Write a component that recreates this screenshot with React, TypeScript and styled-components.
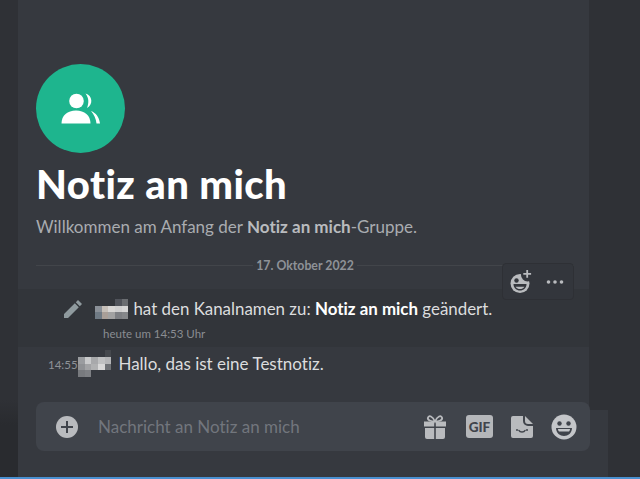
import React from 'react';
import styled, { createGlobalStyle } from 'styled-components';

const GlobalStyle = createGlobalStyle`
	html, body {
		margin: 0;
		padding: 0;
		background: #2f3136;
	}
	* {
		box-sizing: border-box;
	}
`;

const Shell = styled.div`
	width: 640px;
	height: 479px;
	display: grid;
	grid-template-columns: 18px 571px 19px 32px;
	grid-template-rows: 410px 67px 2px;
	overflow: hidden;
	font-family: 'Lato', 'Noto Sans', sans-serif;
	font-variant-ligatures: none;
	background: #2f3136;
`;

const LeftRail = styled.div`
	grid-column: 1;
	grid-row: 1 / 3;
	background: linear-gradient(#2f3136 0, #2f3136 400px, #292b2f 425px);
`;

const Main = styled.main`
	grid-column: 2;
	grid-row: 1 / 3;
	background: #36393f;
	display: flex;
	flex-direction: column;
	padding-top: 64px;
	position: relative;
`;

const SideExtension = styled.div`
	grid-column: 3;
	grid-row: 2;
	background: #36393f;
`;

const TaskbarEdge = styled.div`
	grid-column: 1 / -1;
	grid-row: 3;
	background: #4a90d0;
`;

const Welcome = styled.section`
	padding-left: 18px;
`;

const GroupAvatar = styled.div`
	width: 89px;
	height: 89px;
	border-radius: 50%;
	background: #1eb58e;
	display: flex;
	align-items: center;
	justify-content: center;
`;

const Title = styled.h1`
	margin: 9px 0 0;
	font-size: 40px;
	line-height: 44px;
	font-weight: 900;
	letter-spacing: 0.45px;
	color: #ffffff;
`;

const Subtitle = styled.p`
	margin: 11px 0 0;
	font-size: 17px;
	line-height: 20px;
	color: #a9acb0;
	b {
		font-weight: 700;
		color: #b9bbbe;
	}
`;

const DateDivider = styled.div`
	margin: 18px 15px 0 18px;
	display: flex;
	align-items: center;
	gap: 3px;
	height: 20px;
	font-size: 12.3px;
	font-weight: 700;
	color: #8e9297;
	&::before,
	&::after {
		content: '';
		flex: 1;
		height: 1px;
		background: #42454a;
	}
`;

const Toolbar = styled.div`
	position: absolute;
	left: 484px;
	top: 263px;
	width: 72px;
	height: 37px;
	display: flex;
	align-items: center;
	gap: 14px;
	padding-left: 7px;
	background: #33363c;
	border: 1px solid #2e3035;
	border-radius: 4px;
`;

const SystemRow = styled.div`
	margin-top: 14px;
	height: 58px;
	background: #32353a;
	display: grid;
	grid-template-columns: 77px 1fr;
	grid-template-rows: 31px 1fr;
	align-items: end;
`;

const PencilCell = styled.div`
	grid-row: 1;
	display: flex;
	padding-left: 45px;
	margin-bottom: 1px;
`;

const SystemLine = styled.div`
	grid-column: 2;
	display: flex;
	align-items: center;
	font-size: 16.9px;
	line-height: 22px;
	color: #dcddde;
	b {
		font-weight: 700;
		color: #ffffff;
		white-space: pre;
	}
`;

const SystemTime = styled.div`
	grid-column: 2;
	align-self: start;
	margin-top: 7px;
	padding-left: 8px;
	font-size: 11.5px;
	line-height: 14px;
	color: #8a8d92;
`;

const MessageRow = styled.div`
	height: 33px;
	display: flex;
	align-items: center;
	padding-left: 30px;
	font-size: 17px;
	color: #dcddde;
`;

const Stamp = styled.span`
	font-size: 11.5px;
	padding-top: 2px;
	color: #8e9297;
	width: 30px;
`;

const Mosaic = styled.div<{ $gap: number }>`
	display: grid;
	grid-template-columns: repeat(5, 6.7px);
	grid-auto-rows: 6.7px;
	margin-right: ${(props) => props.$gap}px;
	flex: none;
`;

const MosaicCell = styled.i<{ $shade: string }>`
	display: block;
	background: ${(props) => props.$shade};
`;

const Composer = styled.div`
	position: absolute;
	left: 18px;
	top: 402px;
	width: 554px;
	height: 49px;
	border-radius: 8px;
	background: #40444b;
	display: flex;
	align-items: center;
	padding: 0 13px 0 19px;
`;

const Placeholder = styled.div`
	flex: 1;
	margin-left: 19px;
	font-size: 17px;
	color: #72767d;
`;

const ComposerIcons = styled.div`
	display: flex;
	align-items: center;
	gap: 17px;
`;

const GiftIcon = styled.svg`
	margin-right: 2px;
`;

const GifBadge = styled.div`
	width: 27px;
	height: 23px;
	border-radius: 3px;
	background: #b5b7ba;
	color: #40444b;
	font-size: 13.5px;
	font-weight: 900;
	display: flex;
	align-items: center;
	justify-content: center;
`;

const nameShades = [
	['transparent', 'transparent', 'transparent', '#50535a', '#6a6d71'],
	['#8a9097', '#c6bfb8', '#d8d6d4', '#cfcfcf', '#d6d6d6'],
	['#6f7a84', '#a99f98', '#a2a2a2', '#7e8084', '#85878a'],
];

const stampShades = [
	['transparent', 'transparent', 'transparent', 'transparent', '#45484d'],
	['#9a9c9f', '#c9cacb', '#a8a9ab', '#c0c1c2', '#b5b6b8'],
	['#8f9194', '#a2a3a5', '#b0b1b2', '#d8d8d8', '#6f7276'],
	['#787a7e', '#7e8084', 'transparent', 'transparent', 'transparent'],
];

const PixelName: React.FC<{ shades: string[][]; gap: number }> = ({ shades, gap }) => (
	<Mosaic $gap={gap}>
		{shades.flat().map((shade, i) => (
			<MosaicCell key={i} $shade={shade} />
		))}
	</Mosaic>
);

const App: React.FC = () => (
	<Shell>
		<GlobalStyle />
		<LeftRail />
		<Main>
			<Welcome>
				<GroupAvatar>
					<svg width="40" height="34" viewBox="0 0 40 34" fill="#fff">
						<circle cx="15.500" cy="9" r="7.300" />
						<path d="M.5 31.500c0-8 6-13 14.500-13s14.500 5 14.500 13z" />
						<path d="M24.500 1.500c7 2 8 11 1.500 14.500 2-5 2-10-1.500-14.500z" />
						<path d="M30 19c5 2 8 6 9 12.500h-3.500c-.5-5-2.500-9-5.500-12.500z" />
					</svg>
				</GroupAvatar>
				<Title>Notiz an mich</Title>
				<Subtitle>
					Willkommen am Anfang der <b>Notiz an mich</b>-Gruppe.
				</Subtitle>
			</Welcome>
			<DateDivider>17. Oktober 2022</DateDivider>
			<Toolbar>
				<svg width="22" height="24" viewBox="0 0 22 24">
					<circle cx="10" cy="13.500" r="9.500" fill="#b9bbbe" />
					<circle cx="17.500" cy="5" r="6.500" fill="#33363c" />
					<circle cx="6.500" cy="10.500" r="2.200" fill="#33363c" />
					<path d="M3.500 14h13c0 4-3 6.500-6.500 6.500S3.500 18 3.500 14z" fill="#33363c" />
					<path d="M5.500 16.800h9c-1 1.500-2.800 2.300-4.500 2.300s-3.500-.8-4.500-2.300z" fill="#b9bbbe" />
					<path d="M16.300 0h1.800v3h3v1.800h-3v3h-1.800v-3h-3V3h3z" fill="#b9bbbe" />
				</svg>
				<svg width="18" height="6" viewBox="0 0 18 6" fill="#b9bbbe">
					<circle cx="2.500" cy="3" r="1.800" />
					<circle cx="9" cy="3" r="1.800" />
					<circle cx="15.500" cy="3" r="1.800" />
				</svg>
			</Toolbar>
			<SystemRow>
				<PencilCell>
					<svg width="20" height="20" viewBox="0 0 20 20" fill="#8f9a9e">
						<path d="M15 1l4 4-2.200 2.200-4-4zM11.800 4.200l4 4L5 19H1v-4z" />
					</svg>
				</PencilCell>
				<SystemLine>
					<PixelName shades={nameShades} gap={5} />
					hat den Kanalnamen zu:&nbsp;<b>Notiz an mich</b>&nbsp;geändert.
				</SystemLine>
				<SystemTime>heute um 14:53 Uhr</SystemTime>
			</SystemRow>
			<MessageRow>
				<Stamp>14:55</Stamp>
				<PixelName shades={stampShades} gap={7} />
				Hallo, das ist eine Testnotiz.
			</MessageRow>
			<Composer>
				<svg width="24" height="24" viewBox="0 0 24 24">
					<circle cx="12" cy="12" r="11" fill="#b9bbbe" />
					<path d="M11 6h2v5h5v2h-5v5h-2v-5H6v-2h5z" fill="#40444b" />
				</svg>
				<Placeholder>Nachricht an Notiz an mich</Placeholder>
				<ComposerIcons>
					<GiftIcon width="24" height="24" viewBox="0 0 24 24" fill="#b9bbbe">
						<path d="M1 6.500h10.200v5H1zM12.800 6.500H23v5H12.800zM2 13h9.200v11H4a2 2 0 0 1-2-2zM12.800 13H22v9a2 2 0 0 1-2 2h-7.200z" />
						<path fill="none" stroke="#b9bbbe" strokeWidth="1.800" d="M12 6.500C9.500 1 6 0 5 2.500S8 6.500 12 6.500c4 0 8-1.500 7-4S14.500 1 12 6.500z" />
					</GiftIcon>
					<GifBadge>GIF</GifBadge>
					<svg width="24" height="24" viewBox="0 0 24 24">
						<path fill="#b9bbbe" d="M3 1h10v5a5 5 0 0 0 5 5h5v10a2 2 0 0 1-2 2H3a2 2 0 0 1-2-2V3a2 2 0 0 1 2-2zM15 1l8 8h-5a3 3 0 0 1-3-3z" />
						<path fill="none" stroke="#40444b" strokeWidth="1.600" strokeLinecap="round" d="M9 15.500c1 2 5 2 6 0" />
						<circle cx="7" cy="15" r="1" fill="#40444b" />
						<circle cx="17" cy="15" r="1" fill="#40444b" />
					</svg>
					<svg width="26" height="26" viewBox="0 0 26 26">
						<circle cx="13" cy="13" r="12.500" fill="#c4c6c9" />
						<circle cx="8.500" cy="9.500" r="2.200" fill="#40444b" />
						<circle cx="17.500" cy="9.500" r="2.200" fill="#40444b" />
						<path d="M5 14h16c0 5-4 8-8 8s-8-3-8-8z" fill="#40444b" />
						<path d="M7 15h12c0 1-.5 2-1 2.500H8c-.5-.5-1-1.500-1-2.500z" fill="#c4c6c9" />
					</svg>
				</ComposerIcons>
			</Composer>
		</Main>
		<SideExtension />
		<TaskbarEdge />
	</Shell>
);

export default App;
